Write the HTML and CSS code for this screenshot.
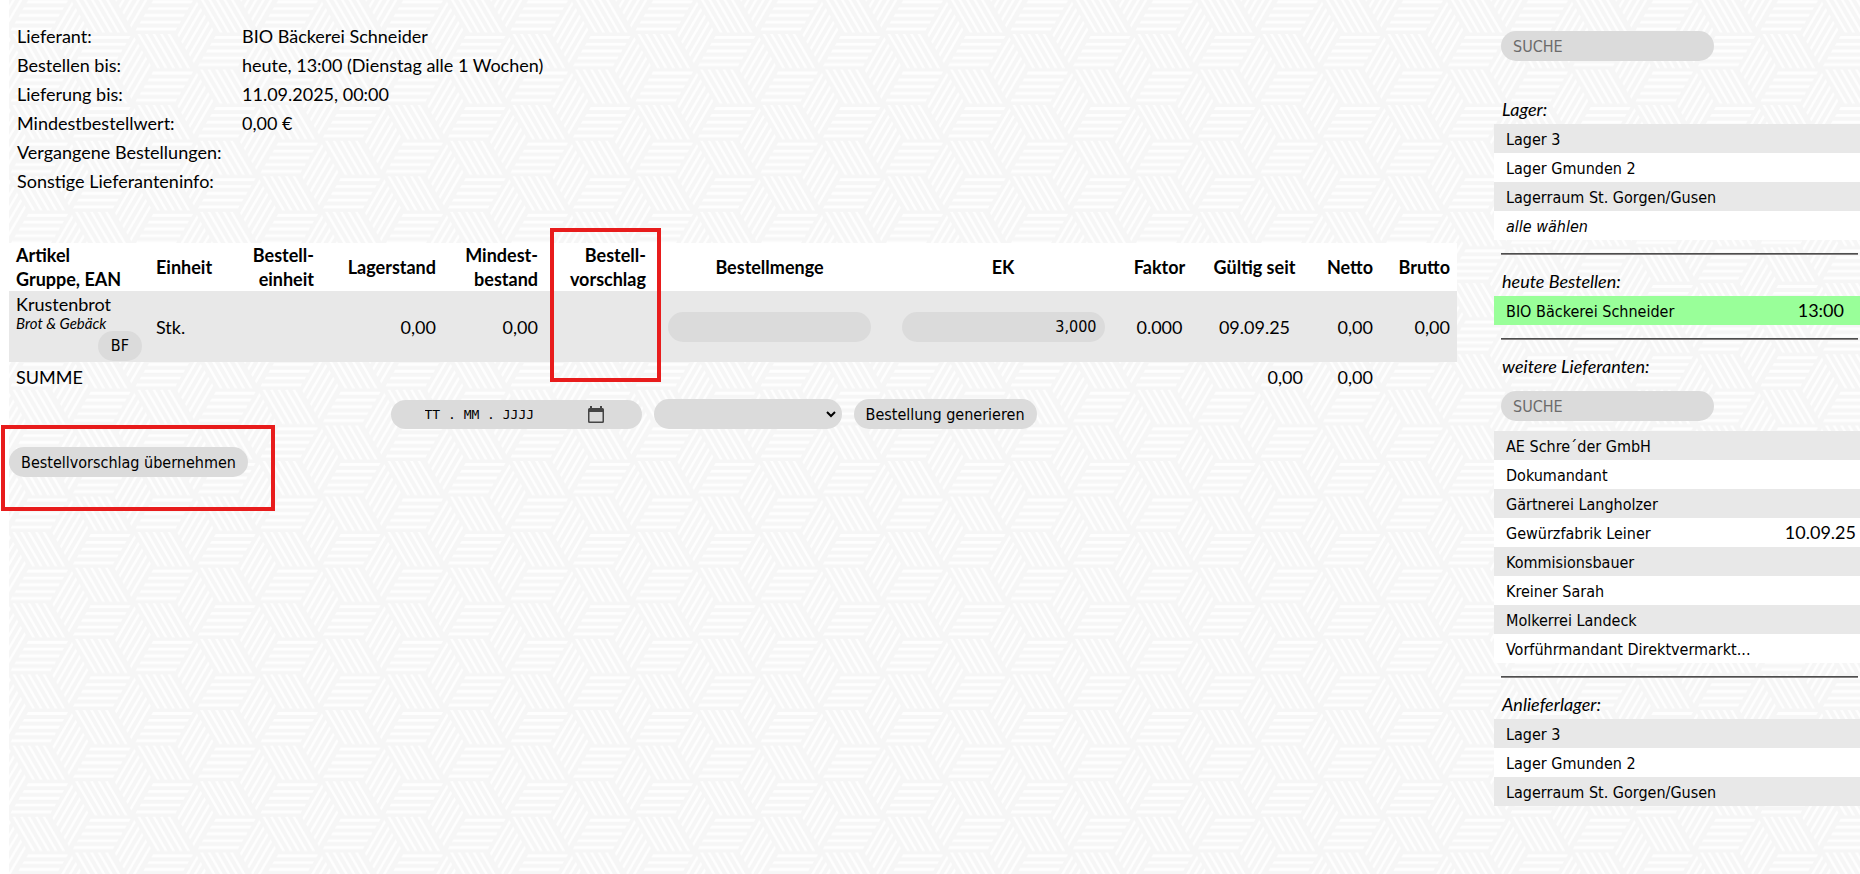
FILE: index.html
```html
<!DOCTYPE html>
<html lang="de">
<head>
<meta charset="utf-8">
<title>Bestellung</title>
<link rel="stylesheet" href="styles.css">
</head>
<body>
<div class="page">
  <main class="main">
    <dl class="info">
      <dt>Lieferant:</dt><dd>BIO Bäckerei Schneider</dd>
      <dt>Bestellen bis:</dt><dd>heute, 13:00 (Dienstag alle 1 Wochen)</dd>
      <dt>Lieferung bis:</dt><dd>11.09.2025, 00:00</dd>
      <dt>Mindestbestellwert:</dt><dd>0,00 €</dd>
      <dt>Vergangene Bestellungen:</dt><dd></dd>
      <dt>Sonstige Lieferanteninfo:</dt><dd></dd>
    </dl>

    <form class="order">
      <table class="articles">
        <colgroup>
          <col class="c-article"><col class="c-unit"><col class="c-order-unit"><col class="c-stock">
          <col class="c-min"><col class="c-proposal"><col class="c-amount"><col class="c-price">
          <col class="c-factor"><col class="c-valid"><col class="c-net"><col class="c-gross">
        </colgroup>
        <thead>
          <tr>
            <th class="left">Artikel<br>Gruppe, EAN</th>
            <th class="left">Einheit</th>
            <th>Bestell-<br>einheit</th>
            <th>Lagerstand</th>
            <th>Mindest-<br>bestand</th>
            <th class="marked">Bestell-<br>vorschlag<span class="mark mark-column"></span></th>
            <th class="center">Bestellmenge</th>
            <th class="center">EK</th>
            <th class="center">Faktor</th>
            <th class="center">Gültig seit</th>
            <th>Netto</th>
            <th>Brutto</th>
          </tr>
        </thead>
        <tbody>
          <tr class="article">
            <td class="left">
              <div class="name">Krustenbrot</div>
              <div class="group">Brot &amp; Gebäck</div>
              <div class="tag"><button type="button" class="pill">BF</button></div>
            </td>
            <td class="left">Stk.</td>
            <td></td>
            <td>0,00</td>
            <td>0,00</td>
            <td></td>
            <td class="center"><input class="pill field" type="text" aria-label="Bestellmenge"></td>
            <td class="center"><input class="pill field" type="text" aria-label="EK" value="3,000"></td>
            <td class="center">0.000</td>
            <td class="center">09.09.25</td>
            <td>0,00</td>
            <td>0,00</td>
          </tr>
        </tbody>
        <tfoot>
          <tr>
            <td class="left" colspan="9">SUMME</td>
            <td>0,00</td>
            <td>0,00</td>
            <td></td>
          </tr>
        </tfoot>
      </table>

      <div class="generate">
        <div class="pill date">
          <input type="text" placeholder="TT . MM . JJJJ" aria-label="Lieferdatum">
          <button type="button" class="calendar" aria-label="Kalender">
            <svg viewBox="0 0 18 19" width="18" height="19"><path d="M3 1h2v2h8V1h2v2h.5A1.500 1.500 0 0 1 17 4.500V16.500a1.500 1.500 0 0 1-1.500 1.500h-13A1.500 1.500 0 0 1 1 16.500v-12A1.500 1.500 0 0 1 2.500 3H3zM2.500 7v9q0 .5.500.500h12q.500 0 .500-.500V7z" fill="#454545" fill-rule="evenodd"/></svg>
          </button>
        </div>
        <select class="pill warehouse" aria-label="Lager"><option></option></select>
        <button type="submit" class="pill">Bestellung generieren</button>
      </div>
      <div class="take-over">
        <button type="button" class="pill">Bestellvorschlag übernehmen</button>
        <span class="mark mark-button"></span>
      </div>
    </form>
  </main>

  <aside class="side">
    <input class="pill search" type="text" placeholder="SUCHE" aria-label="Suche">
    <section class="first">
      <h2>Lager:</h2>
      <ul>
        <li><a href="#">Lager 3</a></li>
        <li><a href="#">Lager Gmunden 2</a></li>
        <li><a href="#">Lagerraum St. Gorgen/Gusen</a></li>
        <li><a href="#"><i>alle wählen</i></a></li>
      </ul>
    </section>
    <hr>
    <section>
      <h2>heute Bestellen:</h2>
      <ul>
        <li class="today"><a href="#">BIO Bäckerei Schneider<time>13:00</time></a></li>
      </ul>
    </section>
    <hr>
    <section>
      <h2>weitere Lieferanten:</h2>
      <input class="pill search inner" type="text" placeholder="SUCHE" aria-label="Lieferanten suchen">
      <ul>
        <li><a href="#">AE Schre´der GmbH</a></li>
        <li><a href="#">Dokumandant</a></li>
        <li><a href="#">Gärtnerei Langholzer</a></li>
        <li><a href="#">Gewürzfabrik Leiner<time>10.09.25</time></a></li>
        <li><a href="#">Kommisionsbauer</a></li>
        <li><a href="#">Kreiner Sarah</a></li>
        <li><a href="#">Molkerrei Landeck</a></li>
        <li><a href="#">Vorführmandant Direktvermarkt...</a></li>
      </ul>
    </section>
    <hr>
    <section>
      <h2>Anlieferlager:</h2>
      <ul>
        <li><a href="#">Lager 3</a></li>
        <li><a href="#">Lager Gmunden 2</a></li>
        <li><a href="#">Lagerraum St. Gorgen/Gusen</a></li>
      </ul>
    </section>
  </aside>
</div>
</body>
</html>
```
FILE: styles.css
```css
:root {
  --text: Lato, "Open Sans", sans-serif;
  --ui: "DejaVu Sans Condensed", "Noto Sans", sans-serif;
  --pill: #dbdbdb;
  --row: #e8e8e8;
}

* { box-sizing: border-box; }

body {
  margin: 0;
  background: #fff;
  color: #000;
  font: 18px/24px var(--text);
}

/* woven stripes: three rhombi per cell */
.page {
  display: flex;
  gap: 37px;
  min-height: 100vh;
  border-left: 9px solid #fff;
  background: #f6f6f6 url("data:image/svg+xml,%3Csvg xmlns='http://www.w3.org/2000/svg' width='125' height='427' viewBox='0 0 125 427'%3E%3Cdefs%3E%3Cg id='c' fill='none' stroke='%23fefefe' stroke-width='2.800'%3E%3Cpath transform='matrix(1 0 -.584 1 41.600 0)' d='M1 40H41M1 46.800H41M1 53.600H41M1 60.400H41M1 67.200H41'/%3E%3Cpath transform='matrix(1 0 .584 1 0 0)' d='M5.300 1V35M12.800 1V35M20.300 1V35M27.800 1V35M35.300 1V35'/%3E%3Cpath transform='matrix(.5 .856 -.5 .856 0 0)' d='M5.300 1V40M12.800 1V40M20.300 1V40M27.800 1V40M35.300 1V40'/%3E%3C/g%3E%3Cpattern id='p' width='125' height='71.1667' patternUnits='userSpaceOnUse'%3E%3Cuse href='%23c'/%3E%3Cuse href='%23c' x='125'/%3E%3Cuse href='%23c' x='62.500' y='35.583'/%3E%3Cuse href='%23c' x='62.500' y='-35.583'/%3E%3C/pattern%3E%3C/defs%3E%3Crect width='125' height='427' fill='url(%23p)'/%3E%3C/svg%3E") -1px 33px;
}

.main { flex: 1; min-width: 0; padding-top: 21px; }

.info {
  display: grid;
  grid-template-columns: 225px 1fr;
  grid-auto-rows: 29px;
  align-items: center;
  margin: 0 8px 48px;
}
.info dd { margin: 0; }

.articles {
  width: 100%;
  table-layout: fixed;
  border-collapse: collapse;
}
.c-article { width: 140px; }
.c-unit { width: 81px; }
.c-order-unit { width: 91px; }
.c-stock { width: 122px; }
.c-min { width: 102px; }
.c-proposal { width: 108px; }
.c-amount { width: 233px; }
.c-price { width: 234px; }
.c-factor { width: 79px; }
.c-valid { width: 111px; }
.c-net { width: 70px; }
.c-gross { width: 77px; }

.articles th, .articles td {
  padding: 0 7px;
  text-align: right;
  white-space: nowrap;
}
.articles th { background: #fff; }
.articles .left { text-align: left; }
.articles .center { text-align: center; }
.article td { height: 71px; background: var(--row); }
.articles tfoot td { height: 29px; }
.name { line-height: 22px; }
.group { font-size: 15px; font-style: italic; line-height: 16px; }
.tag { display: flex; justify-content: flex-end; }

.pill {
  height: 30px;
  padding: 0 12px;
  border: 0;
  border-radius: 15px;
  background: var(--pill);
  color: #000;
  font: 16px/30px var(--ui);
}
button.pill { padding-top: 1px; }
.tag .pill { padding: 0 13px; }
.field { width: 203px; padding: 0 8px; text-align: right; }

.generate {
  display: flex;
  justify-content: center;
  align-items: flex-end;
  gap: 12px;
  padding: 8px 39px 0 0;
}
.date {
  display: flex;
  justify-content: space-between;
  align-items: center;
  width: 251px;
  height: 29px;
  padding: 0 37px 0 34px;
}
.date input {
  width: 130px;
  padding: 0;
  border: 0;
  background: none;
  font: 13px/29px "DejaVu Sans Mono", monospace;
}
.date input::placeholder { color: #000; }
.calendar { display: flex; padding: 0; border: 0; background: none; }
.warehouse {
  width: 188px;
  appearance: none;
  background: var(--pill) url("data:image/svg+xml,%3Csvg xmlns='http://www.w3.org/2000/svg' width='10' height='7'%3E%3Cpath d='M1 1l4 4 4-4' fill='none' stroke='%23000' stroke-width='2'/%3E%3C/svg%3E") right 6px center no-repeat;
}
.take-over { position: relative; padding-top: 18px; }

/* red highlight frames */
.marked { position: relative; }
.mark { position: absolute; border: 4px solid #e81c1c; pointer-events: none; }
.mark-column { top: -15px; left: 5px; width: 111px; height: 154px; }
.mark-button { top: -4px; left: -8px; width: 274px; height: 86px; }

.side { width: 366px; padding-top: 31px; }
.search {
  display: block;
  width: 213px;
  padding-top: 2px;
  margin: 0 0 0 7px;
}
.search::placeholder { color: #6b6b6b; }
.search.inner { margin: 10px 0 10px 7px; }
.side h2 {
  margin: 12px 0 0 8px;
  font-size: 18px;
  font-style: italic;
  font-weight: 400;
  line-height: 29px;
}
.side .first h2 { margin-top: 34px; }
.side ul { margin: 0; padding: 0; list-style: none; }
.side li { background: #fff; }
.side li:nth-child(odd) { background: var(--row); }
.side li a {
  display: flex;
  justify-content: space-between;
  height: 29px;
  padding: 1px 4px 0 12px;
  color: #000;
  font: 16px/29px var(--ui);
  text-decoration: none;
}
.side li.today { padding-right: 12px; background: #9f9; }
.side time { font: 18px/27px var(--text); }
.side hr {
  height: 2px;
  margin: 13px 2px 0 7px;
  border: 0;
  border-top: 1px solid #4e4e4e;
  background: #858282;
}
```
